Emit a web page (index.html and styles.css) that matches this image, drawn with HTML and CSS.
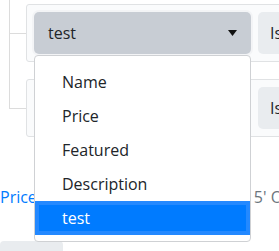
FILE: index.html
```html
<!DOCTYPE html>
<html lang="en">
<head>
  <meta charset="UTF-8">
  <meta name="viewport" content="width=device-width, initial-scale=1.0">
  <title>Query Builder</title>
  <link rel="stylesheet" href="styles.css">
</head>
<body>
  <div class="builder">
    <!-- rule list -->
    <ul class="rules">
      <li class="rule">
        <div class="rule-card">
          <div class="select field active">
            <span>test</span>
            <svg class="caret" width="9" height="6" viewBox="0 0 9 6"><path d="M0 0H9L4.5 6Z" fill="#111"/></svg>
          </div>
          <div class="select operator">Is</div>
        </div>
      </li>
      <li class="rule">
        <div class="rule-card">
          <div class="select field"></div>
          <div class="select operator">Is</div>
        </div>
      </li>
    </ul>

    <!-- generated query -->
    <p class="query"><a href="#" class="query-field">Price</a><span class="query-gap"></span><span class="query-rest">5' OR test</span></p>

    <button class="button" type="button"></button>

    <!-- open field list -->
    <ul class="dropdown">
      <li>Name</li>
      <li>Price</li>
      <li>Featured</li>
      <li>Description</li>
      <li class="selected">test</li>
    </ul>
  </div>
</body>
</html>
```

FILE: styles.css
```css
body {
  margin: 0;
  font-family: 'Open Sans', 'Noto Sans', sans-serif;
  font-size: 16px;
  color: #212529;
  background: #fff;
  overflow: hidden;
}

.builder {
  position: relative;
  height: 251px;
  overflow: hidden;
}

.rules {
  list-style: none;
  margin: 0;
  padding: 4px 0 0 26px;
}

.rule {
  position: relative;
  margin-bottom: 17px;
}

.rule::before {
  content: '';
  position: absolute;
  left: -17px;
  top: 0;
  width: 16px;
  height: 29px;
  border-left: 1px solid #dcdcdc;
  border-bottom: 1px solid #dcdcdc;
}

.rule:first-child::before {
  top: -4px;
  height: 33px;
}

.rule::after {
  content: '';
  position: absolute;
  left: -17px;
  top: 29px;
  height: 46px;
  border-left: 1px solid #dcdcdc;
}

.rule:last-child::after {
  display: none;
}

.rule-card {
  display: flex;
  gap: 7px;
  padding: 7px;
  background: #fafbfc;
  border: 1px solid #e0e2e4;
  border-radius: 3px;
  width: 320px;
}

.select {
  display: flex;
  align-items: center;
  justify-content: space-between;
  box-sizing: border-box;
  height: 42px;
  padding: 0 14px;
  background: #e9ecef;
  border-radius: 5px;
}

.select.field {
  width: 217px;
  flex: none;
}

.select.active {
  background: #c8cdd4;
  box-shadow: 0 0 0 2px #f3f4f6;
}

.caret {
  display: block;
}

.select.operator {
  flex: 1;
  padding-left: 12px;
}

.query {
  margin: 48px 0 0;
  line-height: 24px;
  white-space: nowrap;
  color: #6c757d;
}

.query-field {
  color: #007bff;
  text-decoration: none;
}

.query-gap {
  display: inline-block;
  width: 217px;
}

.button {
  display: block;
  margin-top: 32px;
  width: 63px;
  height: 38px;
  border: none;
  border-radius: 4px;
  background: #e9ecef;
}

.dropdown {
  position: absolute;
  left: 34px;
  top: 55px;
  box-sizing: border-box;
  width: 217px;
  height: 187px;
  margin: 0;
  padding: 9px 0 0;
  list-style: none;
  background: #fff;
  border: 1px solid #cfd1d4;
  border-radius: 4px;
}

.dropdown li {
  height: 34px;
  line-height: 34px;
  padding-left: 27px;
}

.dropdown li.selected {
  background: #007bff;
  box-shadow: inset 0 0 0 4px #2489ff;
  color: #fff;
}
```
